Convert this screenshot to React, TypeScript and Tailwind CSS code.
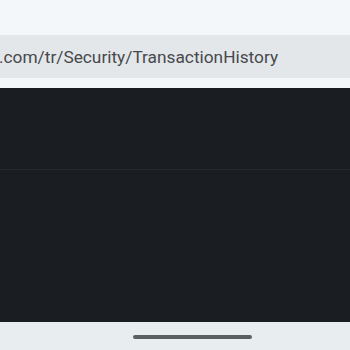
export default function App() {
  return (
    <main className="w-[350px] h-[350px] overflow-hidden flex flex-col bg-[#f3f7fa] font-['Roboto',sans-serif]">
      {/* status area */}
      <div className="h-[35px] shrink-0" />

      {/* address bar */}
      <div className="h-[43px] shrink-0 bg-[#e3e7ea] flex items-center overflow-hidden pt-[3px]">
        <span className="whitespace-nowrap text-[17.3px] leading-none text-[#47494c] -ml-[1px]">
          .com/tr/Security/TransactionHistory
        </span>
      </div>
      <div className="h-[10px] shrink-0" />

      {/* page content */}
      <div className="flex-1 flex flex-col bg-[#1a1d21]">
        <div className="h-[81px] shrink-0" />
        <div className="h-px bg-[#25292d]" />
        <div className="flex-1" />
      </div>

      {/* gesture bar */}
      <div className="h-[28px] shrink-0 bg-[#e8edf0] flex items-center pt-[1px]">
        <div className="ml-[133px] w-[119px] h-[4px] rounded-full bg-[#5c5f62]" />
      </div>
    </main>
  );
}
